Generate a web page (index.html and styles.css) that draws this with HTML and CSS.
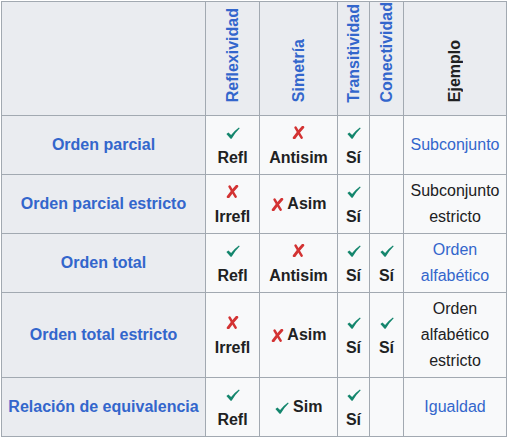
FILE: index.html
```html
<!DOCTYPE html>
<html lang="es">
<head>
<meta charset="utf-8">
<link rel="stylesheet" href="styles.css">
</head>
<body>
<svg class="defs" width="0" height="0" aria-hidden="true">
  <defs>
    <symbol id="ok" viewBox="0 0 14 12">
      <path d="M0.4 6.9 L2.4 5.5 L5.1 8.1 Q8.6 3.4 12.9 0.4 L13.7 1.3 Q9.2 5.6 5.6 11.7 L4.6 11.7 Z" fill="#14866d"/>
    </symbol>
    <symbol id="ko" viewBox="0 0 13 13">
      <path d="M3.6 1.6 Q6.6 6.8 9.6 11.6" fill="none" stroke="#d33333" stroke-width="2.5" stroke-linecap="round"/>
      <path d="M10.8 1.2 Q6.4 5.8 2.2 11.8" fill="none" stroke="#d33333" stroke-width="2.9" stroke-linecap="round"/>
    </symbol>
  </defs>
</svg>
<table class="rel">
  <colgroup>
    <col class="c1"><col class="c2"><col class="c3"><col class="c4"><col class="c5"><col class="c6">
  </colgroup>
  <tr class="head">
    <th></th>
    <th><span class="vert link">Reflexividad</span></th>
    <th><span class="vert link">Simetría</span></th>
    <th><span class="vert link">Transitividad</span></th>
    <th><span class="vert link">Conectividad</span></th>
    <th><span class="vert">Ejemplo</span></th>
  </tr>
  <tr>
    <th class="rowh link">Orden parcial</th>
    <td class="b"><svg class="yes"><use href="#ok"/></svg><br>Refl</td>
    <td class="b"><svg class="no"><use href="#ko"/></svg><br>Antisim</td>
    <td class="b"><svg class="yes"><use href="#ok"/></svg><br>Sí</td>
    <td></td>
    <td class="link">Subconjunto</td>
  </tr>
  <tr>
    <th class="rowh link">Orden parcial estricto</th>
    <td class="b"><svg class="no"><use href="#ko"/></svg><br>Irrefl</td>
    <td class="b"><svg class="no"><use href="#ko"/></svg> Asim</td>
    <td class="b"><svg class="yes"><use href="#ok"/></svg><br>Sí</td>
    <td></td>
    <td>Subconjunto<br>estricto</td>
  </tr>
  <tr>
    <th class="rowh link">Orden total</th>
    <td class="b"><svg class="yes"><use href="#ok"/></svg><br>Refl</td>
    <td class="b"><svg class="no"><use href="#ko"/></svg><br>Antisim</td>
    <td class="b"><svg class="yes"><use href="#ok"/></svg><br>Sí</td>
    <td class="b"><svg class="yes"><use href="#ok"/></svg><br>Sí</td>
    <td class="link">Orden<br>alfabético</td>
  </tr>
  <tr>
    <th class="rowh link">Orden total estricto</th>
    <td class="b"><svg class="no"><use href="#ko"/></svg><br>Irrefl</td>
    <td class="b"><svg class="no"><use href="#ko"/></svg> Asim</td>
    <td class="b"><svg class="yes"><use href="#ok"/></svg><br>Sí</td>
    <td class="b"><svg class="yes"><use href="#ok"/></svg><br>Sí</td>
    <td>Orden<br>alfabético<br>estricto</td>
  </tr>
  <tr>
    <th class="rowh link">Relación de equivalencia</th>
    <td class="b"><svg class="yes"><use href="#ok"/></svg><br>Refl</td>
    <td class="b"><svg class="yes"><use href="#ok"/></svg> Sim</td>
    <td class="b"><svg class="yes"><use href="#ok"/></svg><br>Sí</td>
    <td></td>
    <td class="link">Igualdad</td>
  </tr>
</table>
</body>
</html>
```
FILE: styles.css
```css
html, body {
  margin: 0;
  padding: 0;
  background: #ffffff;
}
body {
  padding: 1px 0 0 1px;
}
.defs {
  position: absolute;
  width: 0;
  height: 0;
  overflow: hidden;
}
.rel {
  border-collapse: collapse;
  table-layout: fixed;
  width: 505px;
  font-family: "Liberation Sans", Arial, sans-serif;
  font-size: 16px;
  line-height: 26px;
  color: #202122;
  background: #f8f9fa;
  border: 1px solid #a2a9b1;
}
.c1 { width: 204px; }
.c2 { width: 54px; }
.c3 { width: 78px; }
.c4 { width: 32px; }
.c5 { width: 34px; }
.c6 { width: 103px; }
.rel th, .rel td {
  border: 1px solid #a2a9b1;
  padding: 3px 6px;
  text-align: center;
  vertical-align: middle;
}
.rel th {
  background: #eaecf0;
  font-weight: bold;
}
.head th {
  height: 104px;
  vertical-align: bottom;
  padding: 0 0 5px 0;
}
.vert {
  display: inline-block;
  writing-mode: vertical-rl;
  transform: rotate(180deg);
  white-space: nowrap;
  line-height: 24px;
}
.link {
  color: #3366cc;
}
.rowh {
  white-space: nowrap;
  padding: 3px 0;
}
.b {
  font-weight: bold;
  white-space: nowrap;
  padding: 3px 0;
}
.yes {
  width: 14px;
  height: 12px;
  vertical-align: -2px;
}
.no {
  width: 13px;
  height: 13px;
  vertical-align: -2px;
}
```
